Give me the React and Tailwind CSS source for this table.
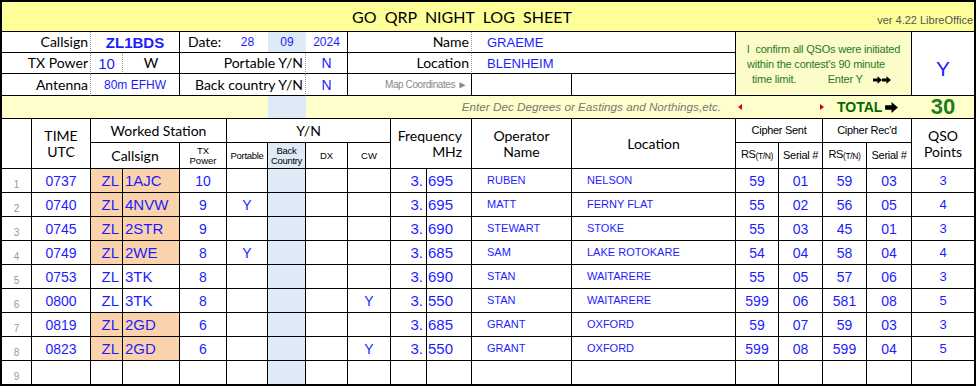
import React from "react";

const rows = [
  ["0737", "1AJC", "10", "", "", "695", "RUBEN", "NELSON", "59", "01", "59", "03", "3", true],
  ["0740", "4NVW", "9", "Y", "", "695", "MATT", "FERNY FLAT", "55", "02", "56", "05", "4", true],
  ["0745", "2STR", "9", "", "", "690", "STEWART", "STOKE", "55", "03", "45", "01", "3", true],
  ["0749", "2WE", "8", "Y", "", "685", "SAM", "LAKE ROTOKARE", "54", "04", "58", "04", "4", true],
  ["0753", "3TK", "8", "", "", "690", "STAN", "WAITARERE", "55", "05", "57", "06", "3", false],
  ["0800", "3TK", "8", "", "Y", "550", "STAN", "WAITARERE", "599", "06", "581", "08", "5", false],
  ["0819", "2GD", "6", "", "", "685", "GRANT", "OXFORD", "59", "07", "59", "03", "3", true],
  ["0823", "2GD", "6", "", "Y", "550", "GRANT", "OXFORD", "599", "08", "599", "04", "5", true],
  ["", "", "", "", "", "", "", "", "", "", "", "", "", false],
];

const Arrow = ({ className }) => (
  <svg viewBox="0 0 14 12" className={className}>
    <path d="M0 3.5H7V0L14 6L7 12V8.5H0Z" fill="#000" />
  </svg>
);

const DataRow = ({ r, i }) => {
  const last = i === rows.length - 1;
  const c = last ? "border-r border-black" : "border-r border-b border-black";
  const hl = r[13] ? "bg-[#fad3ad]" : "bg-white";
  const t = r[5] ? "3." : "";
  return (
    <>
      <div className={`${c} flex items-end justify-center pb-[2px] text-[10px] text-[#999]`}>{i + 1}</div>
      <div className={`${c} flex items-center justify-center text-[14px] text-[#1c1cff]`}>{r[0]}</div>
      <div className={`${c} ${hl} flex items-center justify-end pr-[3px] text-[15px] text-[#1c1cff]`}>{r[1] ? "ZL" : ""}</div>
      <div className={`${c} ${hl} flex items-center pl-[2px] text-[15px] text-[#1c1cff]`}>{r[1]}</div>
      <div className={`${c} flex items-center justify-center text-[14px] text-[#1c1cff]`}>{r[2]}</div>
      <div className={`${c} flex items-center justify-center text-[14px] text-[#1c1cff]`}>{r[3]}</div>
      <div className={`${c} bg-[#dfeaf7]`}></div>
      <div className={c}></div>
      <div className={`${c} flex items-center justify-center text-[14px] text-[#1c1cff]`}>{r[4]}</div>
      <div className={`${c} flex items-center justify-end pr-[3px] text-[15px] text-[#1c1cff]`}>{t}</div>
      <div className={`${c} flex items-center pl-[1px] text-[15px] text-[#1c1cff]`}>{r[5]}</div>
      <div className={`${c} flex items-center pl-[15px] text-[11px] text-[#1c1cff]`}>{r[6]}</div>
      <div className={`${c} flex items-center pl-[15px] text-[11px] text-[#1c1cff]`}>{r[7]}</div>
      <div className={`${c} flex items-center justify-center text-[14px] text-[#1c1cff]`}>{r[8]}</div>
      <div className={`${c} flex items-center justify-center text-[14px] text-[#1c1cff]`}>{r[9]}</div>
      <div className={`${c} flex items-center justify-center text-[14px] text-[#1c1cff]`}>{r[10]}</div>
      <div className={`${c} flex items-center justify-center text-[14px] text-[#1c1cff]`}>{r[11]}</div>
      <div className={`${last ? "" : "border-b"} border-black flex items-center justify-center text-[13px] text-[#1c1cff]`}>{r[12]}</div>
    </>
  );
};

const App = () => {
  const lbl = "font-['Lato',sans-serif] text-[14px] text-black";
  return (
    <div className="bg-white w-[977px] h-[386px] overflow-hidden">
      <div className="grid w-[976px] h-[386px] border-2 border-black font-['Liberation_Sans',Arial,sans-serif] leading-none grid-cols-[30px_59px_32px_57px_47px_41px_38px_42px_43px_36px_45px_100px_164px_43px_44px_44px_45px_62px] grid-rows-[30px_21px_21px_22px_23px_24px_26px_repeat(8,24px)_23px]">
        {/* title */}
        <div className="col-span-18 border-b border-black bg-[#ffff99] flex items-center">
          <div className="ml-[350px] font-['Lato',sans-serif] text-[16px] whitespace-pre text-black">GO  QRP  NIGHT  LOG  SHEET</div>
          <div className="ml-auto self-end mb-[5px] mr-[1px] text-[11px] text-[#555]">ver 4.22 LibreOffice</div>
        </div>

        {/* row: callsign */}
        <div className={`col-span-2 border-r border-b border-black [border-right-style:dotted] border-r-[#999] flex items-center justify-end pr-[2px] ${lbl}`}>Callsign</div>
        <div className="col-span-2 border-r border-b border-black flex items-center justify-center text-[15px] font-bold text-[#1c1cff]">ZL1BDS</div>
        <div className={`border-b border-black flex items-center pl-[8px] ${lbl}`}>Date:</div>
        <div className="border-b border-black flex items-center justify-center text-[12px] text-[#1c1cff]">28</div>
        <div className="border-b border-black bg-[#dfeaf7] flex items-center justify-center text-[12px] text-[#1c1cff]">09</div>
        <div className="border-r border-b border-black flex items-center justify-center text-[12px] text-[#1c1cff]">2024</div>
        <div className={`col-span-3 border-r border-b border-black [border-right-style:dotted] border-r-[#999] flex items-center justify-end pr-[2px] ${lbl}`}>Name</div>
        <div className="col-span-2 border-r border-b border-black flex items-center pl-[15px] text-[13px] text-[#1c1cff]">GRAEME</div>
        <div className="col-span-4 row-span-3 border-r border-b border-black bg-[#fcfcc8] flex flex-col justify-center text-[11px] tracking-[-0.2px] text-[#267a26] leading-[15px] pt-[2px]">
          <div className="text-center">I&nbsp; confirm all QSOs were initiated</div>
          <div className="pl-[11px]">within the contest's 90 minute</div>
          <div className="pl-[16px] flex items-center whitespace-pre">
            time limit.           Enter Y
            <Arrow className="w-[9px] h-[8px] ml-[10px]" />
            <Arrow className="w-[9px] h-[8px]" />
          </div>
        </div>
        <div className="row-span-3 border-b border-black flex items-start justify-center pt-[26px] text-[21px] text-[#1c1cff]">Y</div>

        {/* row: tx power */}
        <div className={`col-span-2 border-r border-b border-black [border-right-style:dotted] border-r-[#999] flex items-center justify-end pr-[2px] ${lbl}`}>TX Power</div>
        <div className="border-r border-b border-black [border-right-style:dotted] border-r-[#999] flex items-center justify-center text-[15px] text-[#1c1cff]">10</div>
        <div className={`border-r border-b border-black flex items-center justify-center ${lbl}`}>W</div>
        <div className={`col-span-3 border-r border-b border-black [border-right-style:dotted] border-r-[#999] flex items-center justify-end pr-[2px] ${lbl}`}>Portable Y/N</div>
        <div className="border-r border-b border-black flex items-center justify-center text-[14px] text-[#1c1cff]">N</div>
        <div className={`col-span-3 border-r border-b border-black [border-right-style:dotted] border-r-[#999] flex items-center justify-end pr-[2px] ${lbl}`}>Location</div>
        <div className="col-span-2 border-r border-b border-black flex items-center pl-[15px] text-[13px] text-[#1c1cff]">BLENHEIM</div>

        {/* row: antenna */}
        <div className={`col-span-2 border-r border-b border-black [border-right-style:dotted] border-r-[#999] flex items-center justify-end pr-[2px] ${lbl}`}>Antenna</div>
        <div className="col-span-2 border-r border-b border-black flex items-center justify-center text-[12px] text-[#1c1cff]">80m EFHW</div>
        <div className={`col-span-3 border-r border-b border-black [border-right-style:dotted] border-r-[#999] flex items-center justify-end pr-[2px] ${lbl}`}>Back country Y/N</div>
        <div className="border-r border-b border-black flex items-center justify-center text-[14px] text-[#1c1cff]">N</div>
        <div className="col-span-3 border-r border-b border-black flex items-center justify-end pr-[4px] text-[10px] tracking-[-0.4px] text-[#888]">Map Coordinates &#9658;</div>
        <div className="border-r border-b border-black"></div>
        <div className="border-r border-b border-black"></div>

        {/* row: coordinates hint + total */}
        <div className="col-span-6 border-b border-black bg-[#ffffcc]"></div>
        <div className="border-b border-black bg-[#dfeaf7]"></div>
        <div className="col-span-6 border-b border-black bg-[#ffffcc] flex items-center justify-end pr-[15px] italic text-[11.7px] text-[#777]">Enter Dec Degrees or Eastings and Northings,etc.</div>
        <div className="col-span-4 border-b border-black bg-[#ffffcc] flex items-center">
          <svg viewBox="0 0 4 6" className="w-[4px] h-[6px] ml-[2px]"><path d="M4 0V6L0 3Z" fill="#d00" /></svg>
          <svg viewBox="0 0 4 6" className="w-[4px] h-[6px] ml-[78px]"><path d="M0 0V6L4 3Z" fill="#d00" /></svg>
          <span className="ml-[13px] text-[14px] font-bold text-[#006a00]">TOTAL</span>
          <Arrow className="w-[13px] h-[11px] ml-[3px]" />
        </div>
        <div className="border-b border-black bg-[#ffffcc] flex items-center justify-center text-[22px] font-bold text-[#1e7b1e]">30</div>

        {/* header row 1 */}
        <div className="row-span-2 border-r border-b border-black"></div>
        <div className={`row-span-2 border-r border-b border-black flex flex-col items-center justify-center leading-[16px] ${lbl}`}>
          <span>TIME</span>
          <span>UTC</span>
        </div>
        <div className={`col-span-3 border-r border-b border-black flex items-center justify-center ${lbl}`}>Worked Station</div>
        <div className={`col-span-4 border-r border-b border-black flex items-center justify-center ${lbl}`}>Y/N</div>
        <div className={`col-span-2 row-span-2 border-r border-b border-black flex flex-col items-end justify-center pr-[9px] leading-[16px] ${lbl}`}>
          <span>Frequency</span>
          <span>MHz</span>
        </div>
        <div className={`row-span-2 border-r border-b border-black flex flex-col items-center justify-center leading-[16px] ${lbl}`}>
          <span>Operator</span>
          <span>Name</span>
        </div>
        <div className={`row-span-2 border-r border-b border-black flex items-center justify-center ${lbl}`}>Location</div>
        <div className="col-span-2 border-r border-b border-black flex items-center justify-center text-[11px] tracking-[-0.3px]">Cipher Sent</div>
        <div className="col-span-2 border-r border-b border-black flex items-center justify-center text-[11px] tracking-[-0.3px]">Cipher Rec'd</div>
        <div className={`row-span-2 border-b border-black flex flex-col items-center justify-center leading-[16px] ${lbl}`}>
          <span>QSO</span>
          <span>Points</span>
        </div>

        {/* header row 2 */}
        <div className={`col-span-2 border-r border-b border-black flex items-center justify-center ${lbl}`}>Callsign</div>
        <div className="border-r border-b border-black flex flex-col items-center justify-center text-[9.5px] leading-[10px]">
          <span>TX</span>
          <span>Power</span>
        </div>
        <div className="border-r border-b border-black flex items-center justify-center text-[9.5px] tracking-[-0.3px]">Portable</div>
        <div className="border-r border-b border-black bg-[#dfeaf7] flex flex-col items-center justify-center text-[9.5px] leading-[10px] tracking-[-0.3px]">
          <span>Back</span>
          <span>Country</span>
        </div>
        <div className="border-r border-b border-black flex items-center justify-center text-[9.5px]">DX</div>
        <div className="border-r border-b border-black flex items-center justify-center text-[9.5px]">CW</div>
        <div className="border-r border-b border-black flex items-end justify-center pb-[8px] text-[11px] tracking-[-0.4px]">RS<span className="text-[8.5px]">(T/N)</span></div>
        <div className="border-r border-b border-black flex items-center justify-center text-[11px] tracking-[-0.3px]">Serial #</div>
        <div className="border-r border-b border-black flex items-end justify-center pb-[8px] text-[11px] tracking-[-0.4px]">RS<span className="text-[8.5px]">(T/N)</span></div>
        <div className="border-r border-b border-black flex items-center justify-center text-[11px] tracking-[-0.3px]">Serial #</div>

        {rows.map((r, i) => (
          <DataRow key={i} r={r} i={i} />
        ))}
      </div>
    </div>
  );
};

export default App;
